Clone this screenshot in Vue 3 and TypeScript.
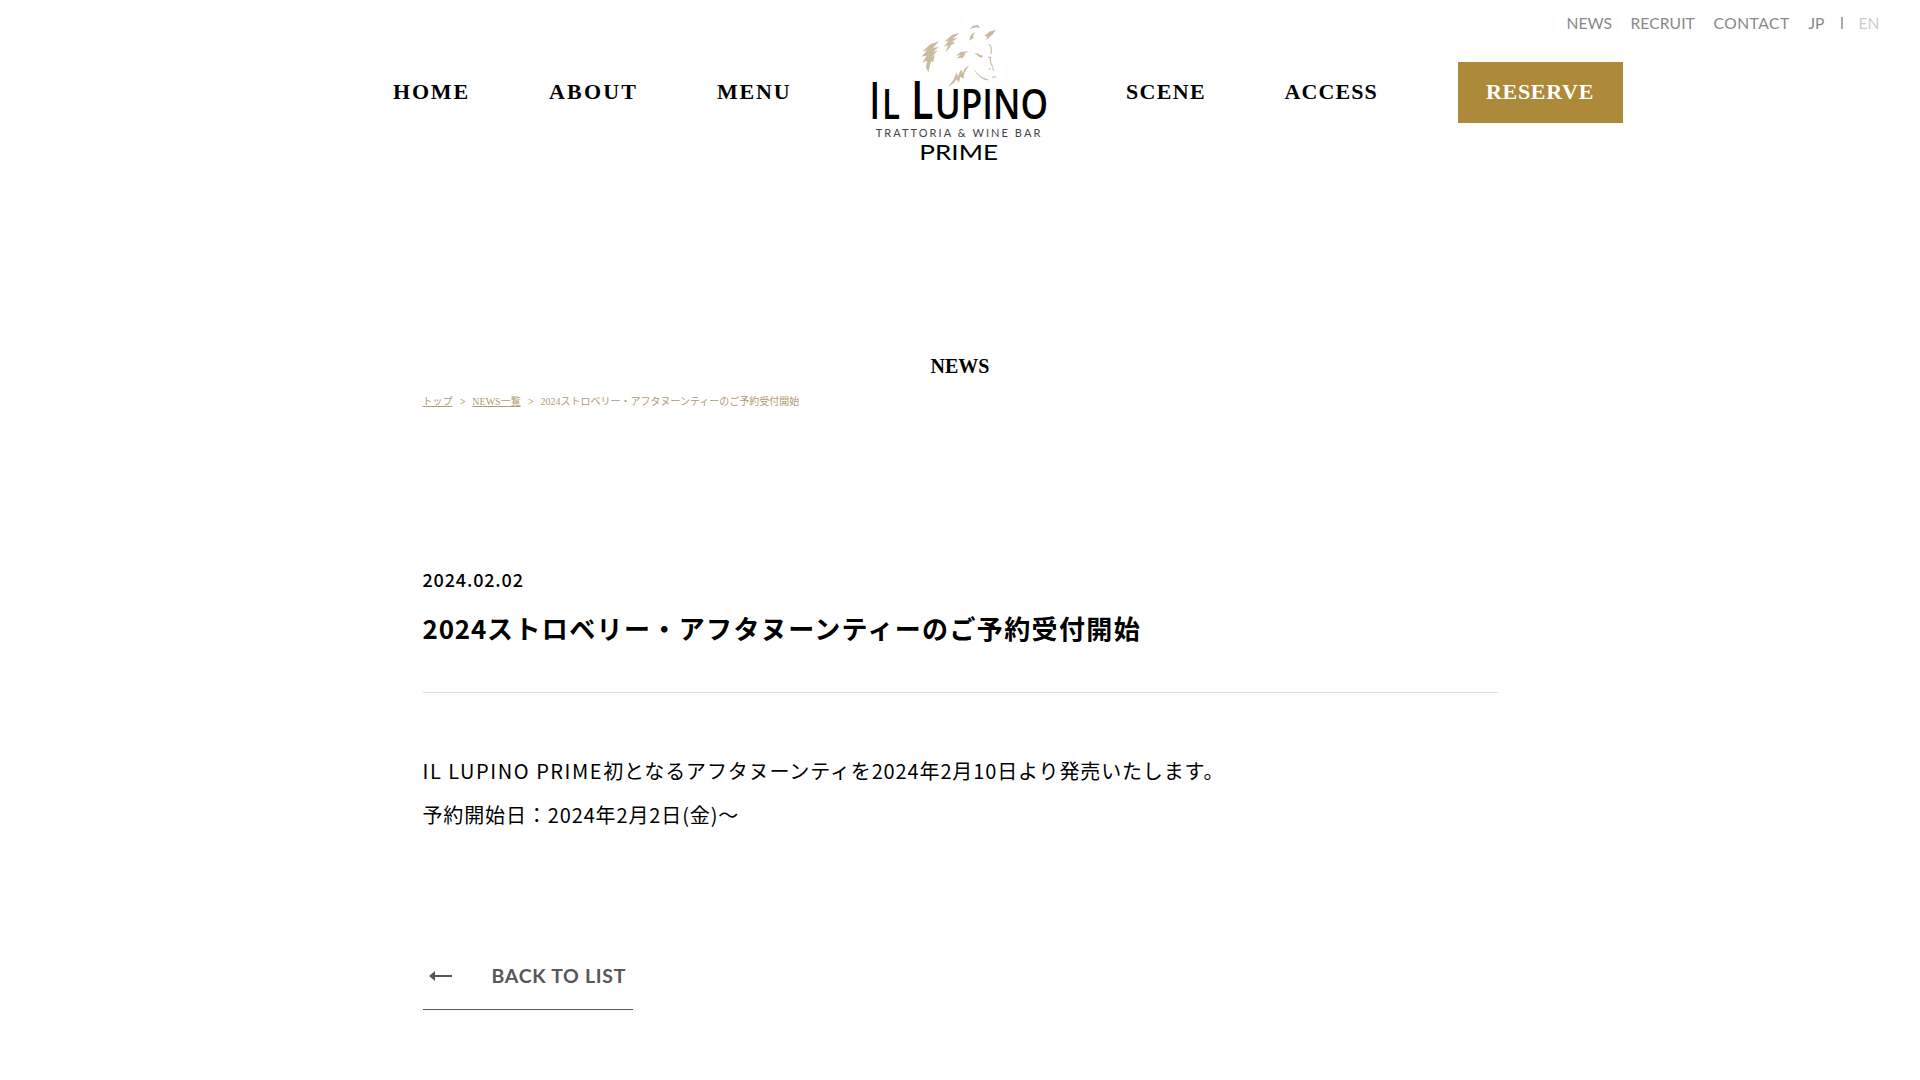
<script setup lang="ts">
interface Item { label: string; w: number; gap: number; ls: number }
const utility: Item[] = [
  { label: 'NEWS', w: 44, gap: 20, ls: 0 },
  { label: 'RECRUIT', w: 63, gap: 20, ls: 0.1 },
  { label: 'CONTACT', w: 76, gap: 19, ls: 0.5 },
  { label: 'JP', w: 17, gap: 15, ls: 0 },
]
const left: Item[] = [
  { label: 'HOME', w: 76, gap: 80, ls: 1.8 },
  { label: 'ABOUT', w: 89, gap: 79, ls: 2.2 },
  { label: 'MENU', w: 75, gap: 0, ls: 1.8 },
]
const right: Item[] = [
  { label: 'SCENE', w: 79, gap: 79.5, ls: 1.3 },
  { label: 'ACCESS', w: 93, gap: 80, ls: 1.1 },
]
const itemStyle = (i: Item) => ({ width: i.w + 'px', marginRight: i.gap + 'px', letterSpacing: i.ls + 'px' })
</script>

<template>
  <div class="page">
    <header>
      <nav class="utility">
        <a v-for="i in utility" :key="i.label" :style="itemStyle(i)">{{ i.label }}</a>
        <i class="bar"></i>
        <a class="muted">EN</a>
      </nav>
      <div class="main-nav">
        <nav class="side">
          <a v-for="i in left" :key="i.label" :style="itemStyle(i)">{{ i.label }}</a>
        </nav>
        <svg class="logo" viewBox="0 0 600 465">
          <g fill="#cbbba0" transform="translate(165 15)">
            <path d="M72 64 46 73 22 95 37 91 19 110 35 107 22 128 36 122 33 143 40 157 48 124 54 127 60 105 50 112 68 91 55 96 70 80 54 84Z" />
            <path d="M133 38 112 44 88 65 101 62 86 80 99 76 92 97 108 78 104 78 121 68 111 66 128 54 114 56Z" />
            <path d="M163 27 174 17 188 14 196 25 183 22 177 24Z" />
            <path d="M181 35 168 44 162 62 176 54 174 47Z" />
            <path d="M243 30 225 34 208 47 216 50 214 60 232 44Z" />
            <path d="M160 94 137 96 124 107 138 105 124 115 142 113 136 122 152 103 146 103Z" />
            <path d="M179 100Q190 99 193 104L204 107 200 114 192 110Z" />
            <path d="M163 135 147 148 144 160 138 148 128 170 125 157 115 180 98 201 118 188 124 178 132 188 136 170 145 176 149 157Z" />
            <path d="M175 144Q190 172 222 179 215 184 198 173 182 162 175 144Z" />
          </g>
          <g fill="none" stroke="#cbbba0" stroke-width="3.5" transform="translate(165 15)">
            <path d="M221 73Q232 78 228 102M219 112H226Q224 130 234 140M222 149 227 145M233 142 236 152M232 174Q238 165 244 174" />
          </g>
          <g class="wordmark">
            <text class="heavy" x="31" y="313" font-size="158" textLength="27" lengthAdjust="spacingAndGlyphs">I</text>
            <text x="66" y="313" font-size="122" textLength="54" lengthAdjust="spacingAndGlyphs">L</text>
            <text x="153" y="313" font-size="158" textLength="67" lengthAdjust="spacingAndGlyphs">L</text>
            <text x="224" y="313" font-size="122" textLength="340" lengthAdjust="spacingAndGlyphs">UPINO</text>
          </g>
          <text class="thin" x="47" y="366" font-size="33" textLength="494" fill="#444">TRATTORIA &amp; WINE BAR</text>
          <text class="thin" x="178" y="434" font-size="62" textLength="236" lengthAdjust="spacingAndGlyphs">PRIME</text>
        </svg>
        <nav class="side">
          <a v-for="i in right" :key="i.label" :style="itemStyle(i)">{{ i.label }}</a>
        </nav>
        <a class="reserve">RESERVE</a>
      </div>
    </header>
    <h1>NEWS</h1>
    <main>
      <div class="crumbs"><a>トップ</a><span class="sep">&gt;</span><a>NEWS一覧</a><span class="sep">&gt;</span><span>2024ストロベリー・アフタヌーンティーのご予約受付開始</span></div>
      <time>2024.02.02</time>
      <h2><span class="year">2024</span>ストロベリー・アフタヌーンティーのご予約受付開始</h2>
      <div class="body">
        <p><span class="latin">IL LUPINO PRIME</span>初となるアフタヌーンティを2024年2月10日より発売いたします。</p>
        <p>予約開始日：2024年2月2日(金)〜</p>
      </div>
      <a class="back">
        <svg width="24" height="12" viewBox="0 0 24 12"><path d="M0 6 6 1V5H23V7H6V11Z" fill="#595757" /></svg>
        <span>BACK TO LIST</span>
      </a>
    </main>
  </div>
</template>

<style>
body { margin: 0; background: #fff; overflow: hidden; }
</style>
<style scoped>
.page { width: 1920px; height: 1080px; overflow: hidden; background: #fff; color: #000; font-family: "Noto Sans CJK JP", sans-serif; }
header { height: 170px; }
.utility { display: flex; align-items: center; height: 46px; padding: 0 0 2px 1566.5px; font: 15.6px/46px Lato, sans-serif; color: #888; white-space: nowrap; }
.bar { width: 2px; height: 12px; background: #aaa; }
.muted { margin-left: 16px; color: #ccc; }
.main-nav { display: flex; margin-top: -33px; padding-left: 393px; font: bold 22px/64px "Liberation Serif", serif; white-space: nowrap; }
.side { display: flex; height: 64px; margin-top: 45px; }
.logo { width: 200px; height: 155px; margin: 0 66px 0 68px; flex: none; overflow: visible; }
.wordmark { font-family: "Open Sans", sans-serif; font-weight: 600; }
.heavy { font-weight: 700; }
.thin { font-family: Lato, sans-serif; font-weight: 400; }
.reserve { width: 165px; height: 61px; margin-top: 47px; background: #ad8a39; color: #fff; line-height: 60px; text-align: center; letter-spacing: .7px; }
h1 { margin: 184px 0 0; font: bold 20px/24px "Liberation Serif", serif; text-align: center; }
main { width: 1075px; margin: 0 auto; }
.crumbs { display: flex; margin-top: 16px; height: 16px; font: 10px/16px "Liberation Serif", "Noto Sans CJK JP", serif; color: #b09a70; white-space: nowrap; }
.crumbs a { text-decoration: underline; }
.sep { margin: 0 6.6px 0 7.5px; font-weight: bold; }
time { display: block; margin-top: 154px; font-size: 18px; font-weight: 500; line-height: 30px; letter-spacing: .85px; }
h2 { margin: 14px 0 0; height: 84px; border-bottom: 1px solid #ddd; font-size: 26px; font-weight: 700; line-height: 40px; letter-spacing: 1.37px; white-space: nowrap; }
.year { letter-spacing: .8px; }
.body { margin-top: 56px; font-size: 20px; line-height: 44px; letter-spacing: .87px; white-space: nowrap; }
p { margin: 0; }
.latin { letter-spacing: 1.55px; }
.back { display: flex; align-items: center; width: 210px; height: 67px; margin-top: 105px; border-bottom: 1px solid #595757; color: #595757; font: bold 19.5px/66px Lato, sans-serif; letter-spacing: .7px; white-space: nowrap; }
.back svg { margin: 1px 39px 0 6px; flex: none; }
</style>
